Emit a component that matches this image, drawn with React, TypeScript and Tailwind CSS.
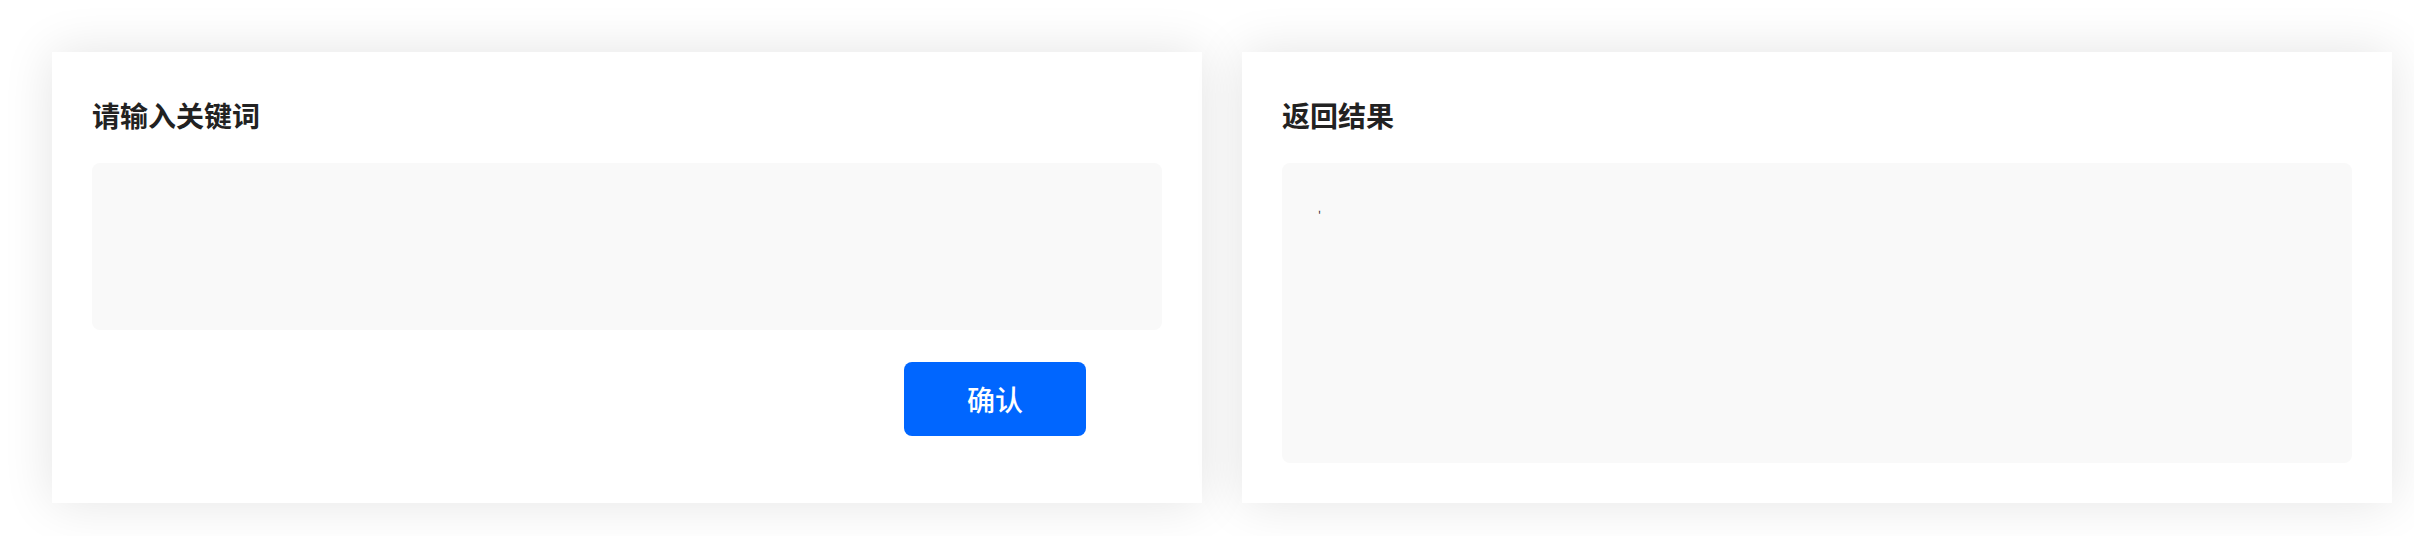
import * as React from "react";

const font = { fontFamily: '"Noto Sans CJK SC", "Noto Sans", sans-serif' };

function Card({ title, children }: { title: string; children: React.ReactNode }) {
  return (
    <div className="flex h-[451px] w-[1150px] shrink-0 flex-col bg-white px-10 pt-[49px] shadow-[0_0_48px_rgba(0,0,0,0.11)]">
      <h2 className="text-[28px] font-bold leading-[28px] text-[#222]">{title}</h2>
      {children}
    </div>
  );
}

export default function App() {
  const [keyword, setKeyword] = React.useState("");
  const [result, setResult] = React.useState("'");

  return (
    <div className="min-h-[536px] bg-white pl-[52px] pt-[52px]" style={font}>
      <div className="flex gap-10">
        <Card title="请输入关键词">
          <textarea
            value={keyword}
            onChange={(e) => setKeyword(e.target.value)}
            className="mt-[34px] h-[167px] w-full resize-none rounded-lg bg-[#f9f9f9] p-4 text-lg outline-none"
          />
          <div className="mt-8 flex justify-end pr-[76px]">
            <button
              onClick={() => setResult(keyword || "'")}
              className="h-[74px] w-[182px] rounded-lg bg-[#0066ff] text-[28px] font-medium leading-none text-white"
            >
              确认
            </button>
          </div>
        </Card>
        <Card title="返回结果">
          <div className="mt-[34px] h-[300px] w-full rounded-lg bg-[#f9f9f9] pl-[36px] pt-[46px] text-[11px] leading-none text-[#333]">
            {result}
          </div>
        </Card>
      </div>
    </div>
  );
}
